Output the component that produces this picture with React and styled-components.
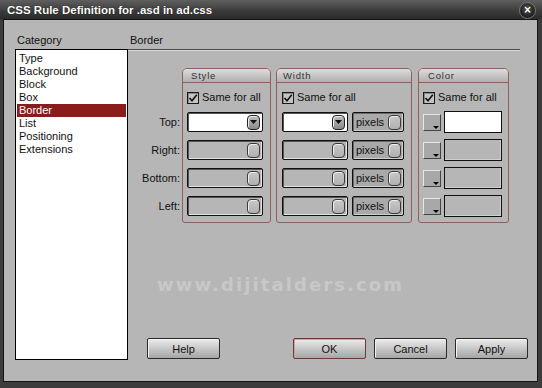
import React from "react";
import styled, { createGlobalStyle } from "styled-components";

const Global = createGlobalStyle`
  html, body { margin: 0; padding: 0; background: #3b3b3b; }
  body { font-family: "Liberation Sans", Arial, sans-serif; font-size: 11px; color: #111; }
  * { box-sizing: border-box; }
`;

const Window = styled.div`
  width: 542px;
  height: 388px;
  background: #3c3c3c;
  display: flex;
  flex-direction: column;
  overflow: hidden;
`;

const TitleBar = styled.div`
  height: 19px;
  flex: none;
  display: flex;
  align-items: center;
  justify-content: space-between;
  padding: 0 6px 0 7px;
  background: linear-gradient(#5f5f5f, #3a3a3a 60%, #2c2c2c);
  color: #fff;
  font-weight: bold;
  font-size: 11.5px;
  text-shadow: 0 0 1px #000;
`;

const CloseButton = styled.div`
  width: 17px;
  height: 17px;
  margin-top: 1px;
  border-radius: 50%;
  background: radial-gradient(circle at 50% 40%, #555, #1c1c1c 70%);
  border: 1px solid #7a7a7a;
  color: #fff;
  display: flex;
  align-items: center;
  justify-content: center;
  font-size: 12px;
  font-weight: bold;
  line-height: 1;
`;

const Body = styled.div`
  flex: 1;
  margin: 0 4px 6px 3px;
  border: 1px solid #141414;
  background: #b6b6b6;
  padding: 13px 9px 21px 11px;
  display: grid;
  grid-template-columns: 113px 1fr;
  position: relative;
`;

const Column = styled.div`
  display: flex;
  flex-direction: column;
  min-height: 0;
`;

const SectionLabel = styled.div`
  height: 16px;
  line-height: 14px;
  padding-left: ${(p) => p.$indent || 0}px;
  color: #111;
`;

const ListBox = styled.div`
  flex: 1;
  background: #fff;
  border: 1px solid #000;
  padding: 2px 1px;
`;

const ListItem = styled.div`
  height: 13px;
  line-height: 13px;
  padding-left: 2px;
  background: ${(p) => (p.$selected ? "#8a1c1c" : "transparent")};
  color: ${(p) => (p.$selected ? "#fff" : "#111")};
`;

const Rule = styled.div`
  height: 2px;
  margin-right: 8px;
  border-top: 1px solid #4a4a4a;
  border-bottom: 1px solid #d8d8d8;
`;

const GroupsRow = styled.div`
  display: flex;
  margin-top: 17px;
`;

const LabelColumn = styled.div`
  width: 54px;
  padding: 44px 2px 0 0;
  display: flex;
  flex-direction: column;
  gap: 8px;
`;

const RowLabel = styled.div`
  height: 20px;
  line-height: 20px;
  text-align: right;
`;

const Group = styled.div`
  width: ${(p) => p.$w}px;
  margin-right: ${(p) => p.$mr || 0}px;
  border: 1px solid #8e5f5f;
  border-radius: 5px 5px 3px 3px;
  padding-bottom: 6px;
  display: flex;
  flex-direction: column;
`;

const GroupHeader = styled.div`
  height: 14px;
  line-height: 13px;
  padding-left: ${(p) => p.$pl || 8}px;
  border-bottom: 1px solid #8e5f5f;
  border-radius: 4px 4px 0 0;
  background: linear-gradient(#dcdcdc, #b0b0b0);
  font-size: 9.5px;
  letter-spacing: 0.8px;
  color: #333;
`;

const GroupBody = styled.div`
  padding: 8px 0 0 ${(p) => p.$pl || 4}px;
  display: flex;
  flex-direction: column;
  gap: 8px;
`;

const CheckRow = styled.div`
  display: flex;
  align-items: center;
  gap: 3px;
  height: 13px;
  line-height: 13px;
  font-size: 11px;
`;

const CheckBox = styled.span`
  width: 12px;
  height: 12px;
  border: 1px solid #1a1a1a;
  background: #c4c4c4;
  box-shadow: inset 1px 1px 0 #888;
  display: flex;
  align-items: center;
  justify-content: center;
`;

const FieldRow = styled.div`
  height: 20px;
  display: flex;
  align-items: stretch;
  gap: ${(p) => p.$gap || 0}px;
`;

const Select = styled.div`
  width: ${(p) => p.$w}px;
  height: 20px;
  border: 1px solid #111;
  border-radius: 2px;
  background: ${(p) => (p.$active ? "#fff" : "#b6b6b6")};
  box-shadow: inset 1px 1px 0 #555, inset -1px -1px 0 ${(p) => (p.$active ? "#fff" : "#e4e4e4")};
  display: flex;
  align-items: center;
  justify-content: flex-end;
  padding-right: 2px;
`;

const UnitBox = styled(Select)`
  background: #a9a9a9;
  justify-content: space-between;
  padding-left: 3px;
  box-shadow: inset 1px 1px 0 #6a6a6a, inset -1px -1px 0 #d0d0d0;
`;

const DropButton = styled.div`
  width: 13px;
  height: 15px;
  border-radius: 4px;
  border: 1px solid ${(p) => (p.$active ? "#222" : "#3a3a3a")};
  background: ${(p) =>
    p.$active ? "linear-gradient(#bdbdbd, #8a8a8a)" : "linear-gradient(#c8c8c8, #b0b0b0)"};
  box-shadow: inset 1px 1px 0 #eee;
  display: flex;
  align-items: center;
  justify-content: center;
`;

const Swatch = styled.div`
  width: 18px;
  height: 17px;
  position: relative;
  background: #a8a8a8;
  border-top: 1px solid #e6e6e6;
  border-left: 1px solid #e6e6e6;
  border-right: 1px solid #444;
  border-bottom: 1px solid #444;
  align-self: center;
`;

const SwatchArrow = styled.span`
  position: absolute;
  right: 1px;
  bottom: 1px;
  width: 0;
  height: 0;
  border-left: 3px solid transparent;
  border-right: 3px solid transparent;
  border-top: 3px solid #000;
`;

const ColorInput = styled.div`
  width: 58px;
  height: 22px;
  margin-top: -1px;
  border: 1px solid #111;
  background: ${(p) => (p.$active ? "#fff" : "#b6b6b6")};
  box-shadow: inset -1px -1px 0 ${(p) => (p.$active ? "#fff" : "#cfcfcf")};
`;

const Spacer = styled.div`
  flex: 1;
`;

const ButtonRow = styled.div`
  display: flex;
  align-items: center;
  gap: 8px;
  padding-left: 19px;
  margin-bottom: 1px;
`;

const Button = styled.button`
  width: 73px;
  height: 21px;
  margin: 0;
  padding: 0;
  font-family: "Liberation Sans", Arial, sans-serif;
  font-size: 11px;
  color: #111;
  border: 1px solid ${(p) => (p.$primary ? "#6d3a3a" : "#2a2a2a")};
  border-radius: 2px;
  background: linear-gradient(#ececec, #c8c8c8 50%, #a6a6a6);
  box-shadow: inset 1px 1px 0 ${(p) => (p.$primary ? "#c9a3a3" : "#f4f4f4")};
  margin-left: ${(p) => (p.$push ? "auto" : "0")};
`;

const Watermark = styled.div`
  position: absolute;
  left: 153px;
  top: 254px;
  font-family: "DejaVu Sans", Verdana, sans-serif;
  font-weight: bold;
  font-size: 18px;
  letter-spacing: 2.1px;
  color: #c8c8c8;
  pointer-events: none;
  white-space: nowrap;
`;

const Arrow = () => (
  <svg width="7" height="4" viewBox="0 0 7 4">
    <path d="M0 0 H7 L3.5 4 Z" fill="#111" />
  </svg>
);

const Check = () => (
  <svg width="10" height="10" viewBox="0 0 10 10">
    <path d="M1.5 5 L4 7.8 L8.8 1.8" fill="none" stroke="#111" strokeWidth="1.6" />
  </svg>
);

const categories = ["Type", "Background", "Block", "Box", "Border", "List", "Positioning", "Extensions"];
const sides = ["Top:", "Right:", "Bottom:", "Left:"];

const SameForAll = () => (
  <CheckRow>
    <CheckBox>
      <Check />
    </CheckBox>
    Same for all
  </CheckRow>
);

export default function App() {
  return (
    <>
      <Global />
      <Window>
        <TitleBar>
          <span>CSS Rule Definition for .asd in ad.css</span>
          <CloseButton>×</CloseButton>
        </TitleBar>
        <Body>
          <Column>
            <SectionLabel $indent={2}>Category</SectionLabel>
            <ListBox>
              {categories.map((c) => (
                <ListItem key={c} $selected={c === "Border"}>
                  {c}
                </ListItem>
              ))}
            </ListBox>
          </Column>
          <Column>
            <SectionLabel $indent={2}>Border</SectionLabel>
            <Rule />
            <GroupsRow>
              <LabelColumn>
                {sides.map((s) => (
                  <RowLabel key={s}>{s}</RowLabel>
                ))}
              </LabelColumn>
              <Group $w={89} $mr={5}>
                <GroupHeader>Style</GroupHeader>
                <GroupBody>
                  <SameForAll />
                  {sides.map((s, i) => (
                    <FieldRow key={s}>
                      <Select $w={76} $active={i === 0}>
                        <DropButton $active={i === 0}>{i === 0 && <Arrow />}</DropButton>
                      </Select>
                    </FieldRow>
                  ))}
                </GroupBody>
              </Group>
              <Group $w={136} $mr={6}>
                <GroupHeader $pl={6}>Width</GroupHeader>
                <GroupBody $pl={5}>
                  <SameForAll />
                  {sides.map((s, i) => (
                    <FieldRow key={s} $gap={4}>
                      <Select $w={66} $active={i === 0}>
                        <DropButton $active={i === 0}>{i === 0 && <Arrow />}</DropButton>
                      </Select>
                      <UnitBox $w={52}>
                        pixels
                        <DropButton />
                      </UnitBox>
                    </FieldRow>
                  ))}
                </GroupBody>
              </Group>
              <Group $w={91}>
                <GroupHeader $pl={9}>Color</GroupHeader>
                <GroupBody>
                  <SameForAll />
                  {sides.map((s, i) => (
                    <FieldRow key={s} $gap={3}>
                      <Swatch>
                        <SwatchArrow />
                      </Swatch>
                      <ColorInput $active={i === 0} />
                    </FieldRow>
                  ))}
                </GroupBody>
              </Group>
            </GroupsRow>
            <Spacer />
            <ButtonRow>
              <Button>Help</Button>
              <Button $primary $push>
                OK
              </Button>
              <Button>Cancel</Button>
              <Button>Apply</Button>
            </ButtonRow>
          </Column>
          <Watermark>www.dijitalders.com</Watermark>
        </Body>
      </Window>
    </>
  );
}
